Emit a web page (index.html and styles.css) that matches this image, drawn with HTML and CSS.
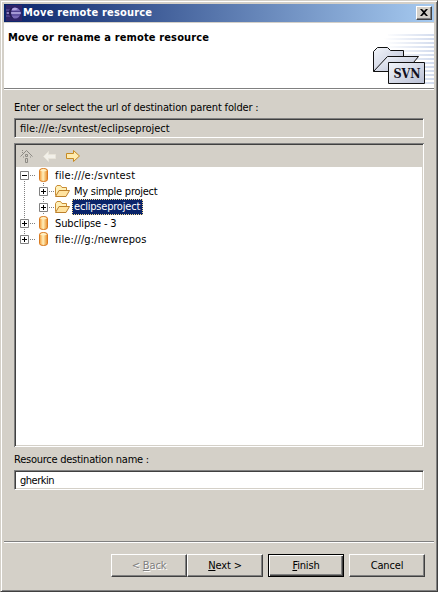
FILE: index.html
```html
<!DOCTYPE html>
<html lang="en">
<head>
<meta charset="utf-8">
<title>Move remote resource</title>
<link rel="stylesheet" href="styles.css">
</head>
<body>
<svg class="defs" width="0" height="0">
  <defs>
    <linearGradient id="gold" x1="0" x2="1" y1="0" y2="0"><stop offset="0" stop-color="#f59a35"/><stop offset=".45" stop-color="#fff0bd"/><stop offset="1" stop-color="#e98a22"/></linearGradient>
    <linearGradient id="sheet" x1="0" y1="0" x2="1" y2="1"><stop offset="0" stop-color="#f3f6fb"/><stop offset="1" stop-color="#b9bfd4"/></linearGradient>
    <linearGradient id="fade"><stop offset="0" stop-color="#d3dcee" stop-opacity="0"/><stop offset="1" stop-color="#d3dcee"/></linearGradient>
    <symbol id="repo" viewBox="0 0 16 16"><path d="M4.500 3.500Q4.500 1.500 8.500 1.500T12.500 3.500V12.500Q12.500 14.500 8.500 14.500T4.500 12.500Z" fill="url(#gold)" stroke="#d87b22"/><path d="M5 3.500Q8.500 5.500 12 3.500Q11 2 8.500 2T5 3.500Z" fill="#fff0c4"/></symbol>
    <symbol id="folder" viewBox="0 0 16 16"><path d="M1.500 12.500V4.500L3 2.500H6.500L8 4.500H12.500V7" fill="#fff0b8" stroke="#c98d35"/><path d="M1.500 13.500L5 7.500H15.500L12 13.500Z" fill="#ffe3a0" stroke="#bd802c"/></symbol>
    <symbol id="plus" viewBox="0 0 9 9"><path d="M.5.5h8v8h-8z" fill="#fff" stroke="#808080"/><path d="M2 4.500h5M4.500 2v5" stroke="#000"/></symbol>
    <symbol id="minus" viewBox="0 0 9 9"><path d="M.5.5h8v8h-8z" fill="#fff" stroke="#808080"/><path d="M2 4.500h5" stroke="#000"/></symbol>
  </defs>
</svg>
<main class="window">
  <header class="titlebar">
    <svg class="app-icon" width="16" height="16" viewBox="0 0 16 16"><path fill="#302468" d="M0 0h16v16H0z"/><path d="M0 5h5M0 8h5M0 11h5" stroke="#6256a5"/><circle cx="9" cy="8" r="5.500" fill="#7969b7"/><path d="M6 3.800Q9 1.500 12 4Q9 6 6 5Z" fill="#b3a6df"/><path d="M1 8h14" stroke="#d1c9f2"/><path d="M4 6.500h10M4 10h10" stroke="#4d3e8d"/><path d="M7 2Q2 4 3 9Q4 13 8 14Q5 11 5 8T7 2Z" fill="#251b54"/></svg>
    <h1 class="title">Move remote resource</h1>
    <button class="close" aria-label="Close"><svg width="8" height="7" viewBox="0 0 8 7"><path d="M0 0h2l2 2 2-2h2L5 3.500 8 7H6L4 5 2 7H0l3-3.500z"/></svg></button>
  </header>
  <section class="banner">
    <h2 class="heading">Move or rename a remote resource</h2>
    <svg class="banner-art" width="78" height="65" viewBox="0 0 78 65">
      <path d="M32 11h46v2H32zM28 15h50v2H28zM28 19h50v2H28zM28 23h50v2H28zM28 27h50v2H28zM28 31h50v2H28zM28 35h50v2H28zM28 39h50v2H28zM28 43h50v2H28zM28 47h50v2H28zM28 51h50v2H28zM28 55h50v2H28zM28 59h50v2H28z" fill="url(#fade)"/>
      <path d="M17.500 48.500V28.500L21.500 24.500H31.500L34.500 27.500H47.500V34" fill="url(#sheet)" stroke="#111"/>
      <path d="M17.500 48.500L31.500 33.500H62.500L50 48.500Z" fill="url(#sheet)" stroke="#111"/>
      <path d="M32.500 39.500h36v21h-36z" fill="url(#sheet)" stroke="#111"/>
      <text class="svn" x="37.500" y="55">SVN</text>
    </svg>
  </section>
  <section class="content">
    <div class="label label-url">Enter or select the url of destination parent folder :</div>
    <div class="field readonly"><span class="t-url">file:///e:/svntest/eclipseproject</span></div>
    <div class="browser">
      <div class="toolbar">
        <svg width="16" height="16" viewBox="0 0 16 16"><g fill="none" stroke="#8d8a84"><path d="M1.500 8.500L7.500 2.500l6 6"/><path d="M3.500 2v4M4.500 8.500v2M11.500 8.500v2" stroke-dasharray="1 1"/><path d="M6.500 6.500h2v2h-2zM6.500 10.500h2v4h-2z"/></g></svg>
        <svg width="16" height="16" viewBox="0 0 16 16"><path d="M1.500 8.500L6.500 3.500V6.500H13.500V10.500H6.500V13.500Z" fill="#f2f0e9" stroke="#e8e4d9"/></svg>
        <svg width="16" height="16" viewBox="0 0 16 16"><path d="M14.500 8L8.500 2.500V5.500H1.500V10.500H8.500V13.500Z" fill="#ffebae" stroke="#c68a23"/></svg>
      </div>
      <ul class="tree">
        <li class="row"><svg class="toggle"><use href="#minus"/></svg><i class="dots"></i><svg class="icon"><use href="#repo"/></svg><span class="name t-svn">file:///e:/svntest</span></li>
        <li class="row child"><svg class="toggle"><use href="#plus"/></svg><i class="dots"></i><svg class="icon"><use href="#folder"/></svg><span class="name t-simple">My simple project</span></li>
        <li class="row child"><svg class="toggle"><use href="#plus"/></svg><i class="dots"></i><svg class="icon"><use href="#folder"/></svg><span class="name t-eclipse selected">eclipseproject</span></li>
        <li class="row"><svg class="toggle"><use href="#plus"/></svg><i class="dots"></i><svg class="icon"><use href="#repo"/></svg><span class="name t-sub">Subclipse - 3</span></li>
        <li class="row"><svg class="toggle"><use href="#plus"/></svg><i class="dots"></i><svg class="icon"><use href="#repo"/></svg><span class="name t-repos">file:///g:/newrepos</span></li>
      </ul>
    </div>
    <div class="label label-name">Resource destination name :</div>
    <div class="field"><span class="t-input">gherkin</span></div>
  </section>
  <footer class="buttons">
    <button class="button disabled"><span>&lt; <u>B</u>ack</span></button>
    <button class="button"><span><u>N</u>ext &gt;</span></button>
    <button class="button default"><span><u>F</u>inish</span></button>
    <button class="button cancel"><span>Cancel</span></button>
  </footer>
</main>
</body>
</html>
```
FILE: styles.css
```css
* { box-sizing: border-box; }
body { margin: 0; background: #d4d0c8; font: 11px/14px "DejaVu Sans Condensed", "Noto Sans", sans-serif; color: #000; }
.defs { position: absolute; }
svg { display: block; flex: none; }
.window {
  width: 438px; height: 592px; padding: 3px; display: flex; flex-direction: column;
  border: 1px solid; border-color: #d4d0c8 #404040 #404040 #d4d0c8;
  box-shadow: inset 1px 1px #fff, inset -1px -1px #808080;
  background: #d4d0c8; white-space: nowrap;
}
.titlebar { height: 18px; display: flex; align-items: center; padding: 0 2px; background: linear-gradient(90deg, #0a246a, #a6caf0); }
.title { margin: 0 auto 0 1px; font-size: 11px; line-height: 16px; color: #fff; letter-spacing: .18px; }
.close { width: 16px; height: 14px; padding: 0 0 1px; display: flex; align-items: center; justify-content: center; background: #d4d0c8; border: 1px solid; border-color: #fff #404040 #404040 #fff; box-shadow: inset -1px -1px #808080; }
.banner { height: 67px; display: flex; justify-content: space-between; background: #fff; border-top: 1px solid #d4d0c8; border-bottom: 1px solid #808080; box-shadow: 0 1px #fff; }
.heading { margin: 8px 0 0 4px; font-size: 11px; line-height: 14px; letter-spacing: .14px; }
.svn { font: bold 12.5px "DejaVu Serif Condensed", "DejaVu Serif", serif; fill: #101020; }
.content { padding: 11px 10px 0; display: flex; flex-direction: column; }
.label { height: 14px; line-height: 16px; }
.label-url { letter-spacing: -.16px; }
.field { height: 20px; margin-top: 4px; padding: 1px 4px 1px 5px; background: #fff; border: 1px solid; border-color: #808080 #fff #fff #808080; box-shadow: inset 1px 1px #404040, inset -1px -1px #d4d0c8; }
.readonly { background: #d4d0c8; }
.field span { line-height: 17px; }
.t-input { letter-spacing: -.5px; }
.browser { height: 304px; margin-top: 5px; padding: 2px; background: #fff; box-shadow: inset 1px 1px #808080, inset -1px -1px #fff, inset 2px 2px #404040, inset -2px -2px #d4d0c8; }
.toolbar { height: 22px; padding: 3px 0 0 3px; display: flex; gap: 7px; background: #d4d0c8; }
.tree { list-style: none; margin: 0; padding: 0 0 0 4px; background: repeating-linear-gradient(#808080 0 1px, #fff 1px 2px) 8px 12px / 1px 60px no-repeat; }
.row { height: 16px; display: flex; align-items: center; }
.child { padding-left: 19px; background: repeating-linear-gradient(#808080 0 1px, #fff 1px 2px) 23px 0 / 1px 16px no-repeat; }
.toggle { width: 9px; height: 9px; }
.dots { width: 6px; height: 1px; background: repeating-linear-gradient(90deg, #fff 0 1px, #808080 1px 2px); }
.icon { width: 16px; height: 16px; }
.name { height: 16px; margin-left: 2px; padding: 0 2px; line-height: 17px; }
.t-svn { letter-spacing: .15px; }
.t-simple { letter-spacing: -.25px; }
.t-eclipse { letter-spacing: -.2px; }
.t-sub { letter-spacing: -.15px; }
.t-repos { letter-spacing: .12px; }
.selected { width: 71px; line-height: 16px; background: #0a246a; color: #fff; outline: 1px dotted #f5db95; outline-offset: -1px; }
.label-name { margin-top: 5px; letter-spacing: -.25px; }
.buttons { margin-top: auto; height: 47px; padding: 12px 9px 0 0; display: flex; justify-content: flex-end; border-top: 1px solid #808080; box-shadow: inset 0 1px #fff; }
.button { width: 76px; height: 23px; padding: 0; font: inherit; line-height: 19px; color: #000; background: #d4d0c8; border: 1px solid; border-color: #fff #404040 #404040 #fff; box-shadow: inset -1px -1px #808080; letter-spacing: -.15px; }
.disabled { color: #808080; text-shadow: 1px 1px #fff; }
.default { margin: 0 5px; border-color: #000; box-shadow: inset 1px 1px #fff, inset -1px -1px #404040, inset -2px -2px #808080; }
```
